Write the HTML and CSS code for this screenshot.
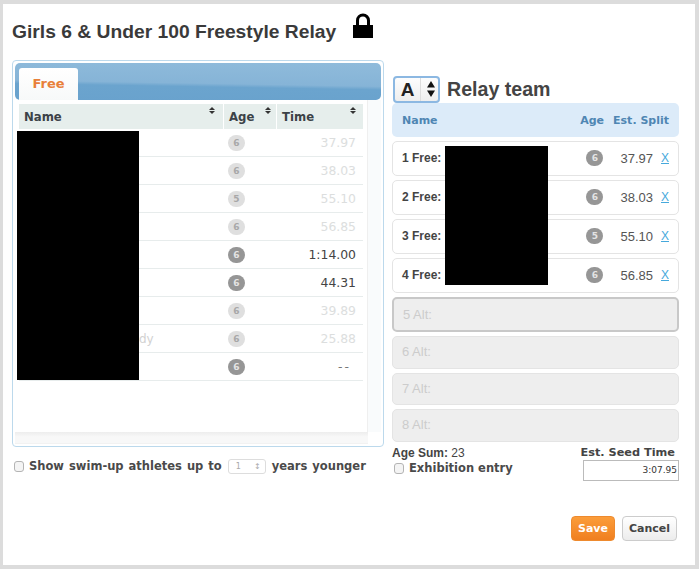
FILE: index.html
```html
<!DOCTYPE html>
<html lang="en">
<head>
<meta charset="utf-8">
<title>Relay</title>
<link rel="stylesheet" href="styles.css">
</head>
<body>
<div class="dialog">
  <header class="title-row">
    <h1>Girls 6 &amp; Under 100 Freestyle Relay</h1>
    <svg class="lock" viewBox="0 0 20 26" width="20" height="26"><path d="M0 12h20v13H0z" fill="#000"/><path d="M4.5 13V7.5a5.5 5.5 0 0 1 11 0V13" fill="none" stroke="#000" stroke-width="3"/></svg>
  </header>
  <div class="columns">
    <section class="left">
      <div class="panel">
        <div class="tabbar"><div class="tab">Free</div></div>
        <div class="scroll-body">
          <div class="table-wrap">
            <div class="thead">
              <div class="th th-name">Name<span class="sort"></span></div>
              <div class="th th-age">Age<span class="sort"></span></div>
              <div class="th th-time">Time<span class="sort"></span></div>
            </div>
            <div class="trow off"><span class="tn"></span><span class="badge">6</span><span class="tt">37.97</span></div>
            <div class="trow off"><span class="tn"></span><span class="badge">6</span><span class="tt">38.03</span></div>
            <div class="trow off"><span class="tn"></span><span class="badge">5</span><span class="tt">55.10</span></div>
            <div class="trow off"><span class="tn"></span><span class="badge">6</span><span class="tt">56.85</span></div>
            <div class="trow"><span class="tn"></span><span class="badge">6</span><span class="tt">1:14.00</span></div>
            <div class="trow"><span class="tn"></span><span class="badge">6</span><span class="tt">44.31</span></div>
            <div class="trow off"><span class="tn"></span><span class="badge">6</span><span class="tt">39.89</span></div>
            <div class="trow off"><span class="tn">dy</span><span class="badge">6</span><span class="tt">25.88</span></div>
            <div class="trow"><span class="tn"></span><span class="badge">6</span><span class="tt dash">--</span></div>
          </div>
          <div class="vtrack"></div>
        </div>
        <div class="hscroll"></div>
        <div class="redact-left"></div>
      </div>
      <div class="swim">
        <span class="check"></span>
        <span>Show swim-up athletes up to</span>
        <span class="mini-select">1<i>&#8597;</i></span>
        <span>years younger</span>
      </div>
    </section>
    <section class="right">
      <div class="team-head">
        <span class="team-select"><b>A</b><svg viewBox="0 0 10 18" width="10" height="18"><path d="M5 1l4 6.5H1zM5 17l4-6.5H1z" fill="#111"/></svg></span>
        <h2>Relay team</h2>
      </div>
      <div class="rhead"><span class="rh-name">Name</span><span class="rh-age">Age</span><span class="rh-split">Est. Split</span></div>
      <div class="slots">
        <div class="slot"><b>1 Free:</b><span class="badge dark">6</span><span class="split">37.97</span><a class="x">X</a></div>
        <div class="slot"><b>2 Free:</b><span class="badge dark">6</span><span class="split">38.03</span><a class="x">X</a></div>
        <div class="slot"><b>3 Free:</b><span class="badge dark">5</span><span class="split">55.10</span><a class="x">X</a></div>
        <div class="slot"><b>4 Free:</b><span class="badge dark">6</span><span class="split">56.85</span><a class="x">X</a></div>
        <div class="slot alt focus">5 Alt:</div>
        <div class="slot alt">6 Alt:</div>
        <div class="slot alt">7 Alt:</div>
        <div class="slot alt">8 Alt:</div>
        <div class="redact-right"></div>
      </div>
      <div class="summary">
        <div class="sum-left">
          <div class="age-sum"><b>Age Sum:</b> 23</div>
          <div class="exh"><span class="check"></span><span>Exhibition entry</span></div>
        </div>
        <div class="sum-right">
          <div class="seed-label">Est. Seed Time</div>
          <div class="seed-input">3:07.95</div>
        </div>
      </div>
      <div class="actions">
        <button class="btn save">Save</button>
        <button class="btn cancel">Cancel</button>
      </div>
    </section>
  </div>
</div>
</body>
</html>
```
FILE: styles.css
```css
* { box-sizing: border-box; }
html, body { margin: 0; height: 100%; }
body { background: #dcdcdc; padding: 4px 4px 4px 3px; height: 569px; overflow: hidden; font-family: "DejaVu Sans", sans-serif; }
.dialog { background: #fff; height: 561px; padding: 0 16px 0 9px; }
.title-row { display: flex; align-items: flex-start; height: 56px; }
h1 { margin: 18px 0 0; font: bold 19.25px/20px "Liberation Sans", sans-serif; color: #3a3a3a; }
.lock { margin: 9px 0 0 17px; }
.columns { display: flex; gap: 8px; }
.left { width: 372px; }
.panel { position: relative; width: 372px; height: 387px; border: 1px solid #bcd9ec; border-radius: 4px; padding: 2px; background: #fff; }
.tabbar { height: 37px; border-radius: 5px; background: linear-gradient(181deg, #8fbbdb 0, #86b4d7 54%, #6ba4ce 62%, #69a2cd 100%); padding: 5px 0 0 4px; display: flex; }
.tab { width: 59px; height: 32px; background: linear-gradient(#fff, #f7f9f9); border-radius: 3px 3px 0 0; color: #e8803a; font: bold 13px/32px "DejaVu Sans", sans-serif; text-align: center; }
.scroll-body { display: flex; height: 332px; }
.table-wrap { width: 353px; padding: 4px 4px 0 4px; border-right: 1px solid #efefef; }
.vtrack { flex: 1; background: #f9fbfc; }
.thead { display: flex; height: 25px; gap: 1px; }
.th { position: relative; background: #e6eeec; font: bold 11.7px/25px "DejaVu Sans", sans-serif; color: #3c4247; padding: 1px 0 0 5px; }
.th-name { width: 204px; }
.th-age { width: 52px; }
.th-time { width: 86px; }
.sort { position: absolute; right: 7px; top: 2px; width: 6px; height: 9px; }
.th-name .sort { right: 8px; }
.th-age .sort { right: 5px; }
.sort::before, .sort::after { content: ""; position: absolute; left: 0; border: 3px solid transparent; }
.sort::before { top: -2px; border-bottom: 3px solid #333; }
.sort::after { top: 5px; border-top: 3px solid #333; }
.trow { display: flex; align-items: center; height: 28px; border-bottom: 1px solid #e7ecec; font-size: 12px; color: #444; }
.tn { width: 209px; padding-left: 120px; color: #d2d2d2; font-size: 12px; }
.badge { flex: none; width: 17px; height: 16px; border-radius: 8px; background: #969696; color: #e4e4e4; font: bold 9px/16px "DejaVu Sans", sans-serif; text-align: center; }
.tt { flex: 1; text-align: right; padding-right: 7px; font-size: 12.4px; }
.tt.dash { padding-right: 12px; letter-spacing: 2px; color: #777; }
.trow.off .tt { color: #dcdede; }
.trow.off .badge { background: #dfdfdf; color: #a8a8a8; }
.hscroll { height: 12px; width: 353px; background: linear-gradient(#ededed, #f8f8f8 40%, #f8f8f8 90%, #eee); }
.redact-left { position: absolute; left: 4px; top: 70px; width: 122px; height: 249px; background: #000; }
.swim { display: flex; align-items: center; margin: 10px 0 0 2px; font: bold 11.5px/18px "DejaVu Sans", sans-serif; word-spacing: 1px; color: #4a4a4a; white-space: nowrap; }
.check { flex: none; width: 10px; height: 11px; margin-right: 5px; border: 1px solid #b4b4b4; border-radius: 3px; background: #f4f4f4; }
.mini-select { display: flex; justify-content: space-between; align-items: center; width: 38px; height: 15px; margin: 0 6px; padding: 0 4px 0 7px; border: 1px solid #ddd; border-radius: 3px; font: 8px/13px "DejaVu Sans", sans-serif; color: #aaa; }
.mini-select i { font-style: normal; }
.right { width: 288px; }
.team-head { display: flex; align-items: center; height: 28px; margin-top: 15px; padding-left: 1px; }
.team-select { display: flex; align-items: center; width: 47px; height: 27px; border: 2px solid #8cb8e2; border-radius: 4px; background: linear-gradient(#fdfdfd,#eee); }
.team-select b { width: 26px; border-right: 1px solid #ddd; text-align: center; font: bold 19px/23px "Liberation Sans", sans-serif; color: #222; }
.team-select svg { margin-left: 5px; }
h2 { margin: 0 0 0 7px; font: bold 19.6px/24px "Liberation Sans", sans-serif; color: #444; }
.rhead { display: flex; align-items: center; height: 34px; padding: 0 10px; background: #dcebf9; border-radius: 5px; font: bold 11px "DejaVu Sans", sans-serif; color: #4f86b3; }
.rh-name { flex: 1; }
.rh-split { margin-left: 9px; }
.slots { position: relative; margin-top: 4px; display: flex; flex-direction: column; gap: 4px; }
.slot { display: flex; align-items: center; height: 35px; padding: 0 9px 1px 9px; border: 1px solid #e4e4e4; border-radius: 5px; background: #fff; font: 12px "Liberation Sans", sans-serif; color: #555; }
.slot b { flex: 1; color: #444; }
.slot .badge { margin-right: 17px; }
.split { font-size: 13px; color: #555; }
.x { margin-left: 8px; color: #46a9dc; text-decoration: underline; font-size: 12px; }
.alt { height: 32.5px; background: #eeeeee; color: #ccc; font-size: 13px; padding-left: 9px; }
.alt.focus { height: 35px; border: 2px solid #c8c8c8; padding-left: 9px; }
.redact-right { position: absolute; left: 53px; top: 5px; width: 103px; height: 139px; background: #000; }
.summary { display: flex; justify-content: space-between; margin-top: 4px; }
.age-sum { font: 12px/14px "Liberation Sans", sans-serif; color: #444; }
.exh { display: flex; align-items: center; margin: 1px 0 0 2px; font: bold 11.5px/15px "DejaVu Sans", sans-serif; color: #4a4a4a; }
.sum-right { display: flex; flex-direction: column; align-items: flex-end; }
.seed-label { font: bold 11.3px/14px "DejaVu Sans", sans-serif; color: #444; padding-right: 4px; }
.seed-input { width: 96px; height: 21px; padding-right: 1px; border: 1px solid #bbb; font: 9px/19px "DejaVu Sans", sans-serif; color: #333; text-align: right; }
.actions { display: flex; justify-content: flex-end; gap: 7px; margin-top: 35px; padding-right: 2px; }
.btn { height: 25px; border-radius: 4px; font: bold 11px "DejaVu Sans", sans-serif; padding: 0; }
.save { width: 44px; border: 1px solid #ee8a2e; background: linear-gradient(#fb9d3a, #f07f20); color: #fff; }
.cancel { width: 55px; border: 1px solid #ccc; background: linear-gradient(#fff, #ececec); color: #444; }
```
